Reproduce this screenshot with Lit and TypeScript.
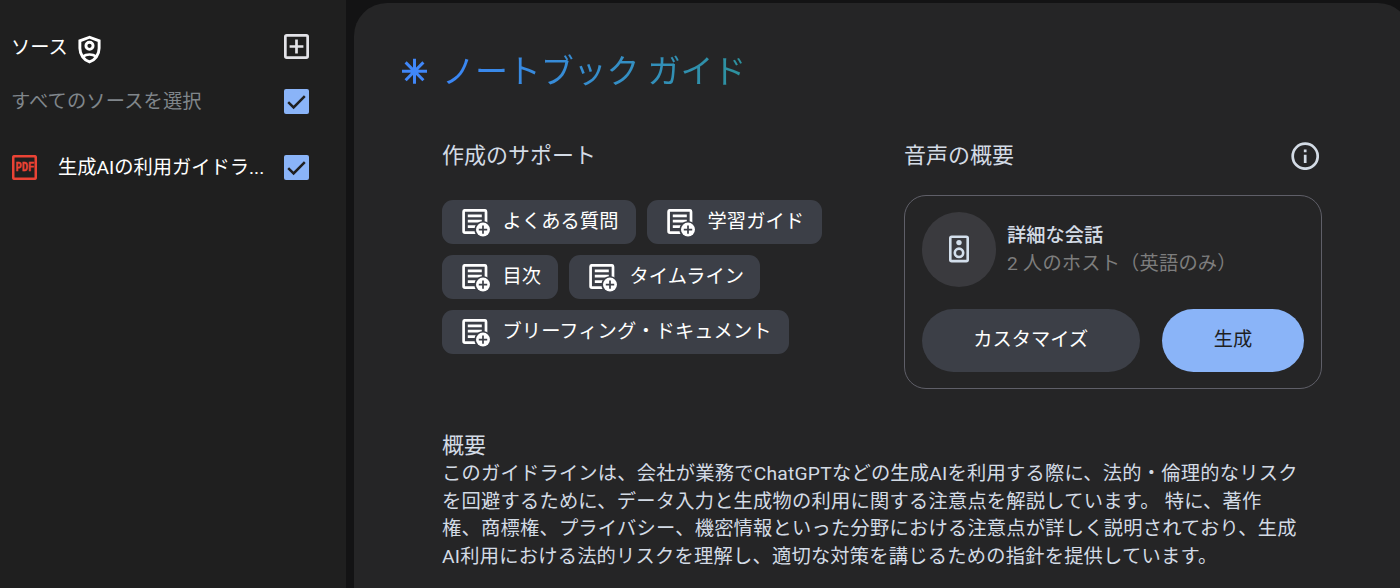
import { css, html, LitElement, svg } from "lit";
import { customElement, property } from "lit/decorators.js";

const shieldIcon = svg`
    <path d="M12 3.1 5 5.7v5.4c0 4.6 3 8.7 7 9.9 4-1.2 7-5.3 7-9.9V5.7z"/>
    <circle cx="12" cy="9.3" r="2.6"/>
    <path d="M7 17.2c3-2 7-2 10 0"/>
`;

@customElement('source-checkbox')
export class SourceCheckbox extends LitElement {

    static styles = css`
        :host {
            display: flex;
            width: 25px;
            height: 25px;
            border-radius: 2px;
            background: #8ab4f8;
        }

        svg {
            width: 25px;
            height: 25px;
            fill: none;
            stroke: #1f1f1f;
            stroke-width: 2.5;
        }
    `;

    render() {
        return html`<svg viewBox="0 0 25 25"><path d="M4.2 13.2 9.6 18.4 20.8 7.2"/></svg>`;
    }

}

@customElement('note-chip')
export class NoteChip extends LitElement {

    static styles = css`
        :host {
            display: flex;
        }

        .chip {
            display: flex;
            align-items: center;
            box-sizing: border-box;
            height: 44px;
            padding: 0 0 0 20px;
            border: 0;
            border-radius: 11px;
            background: #3c3f47;
            color: #fff;
            font: inherit;
            font-size: 19.25px;
            letter-spacing: 0.08px;
            white-space: nowrap;
        }

        .chip svg {
            width: 28px;
            height: 28px;
            margin: 1px 12.5px 0 0;
            flex: none;
        }

        .label {
            line-height: 28px;
            margin-top: -1px;
        }
    `;

    @property() label = '';
    @property({ type: Number }) width = 0;

    render() {
        return html`<button class="chip" style="width: ${this.width}px">
            <svg viewBox="0 0 28 28" fill="none" stroke="#fff" stroke-width="2.7">
                <rect x="1.6" y="1.3" width="22.4" height="22.4" rx="1.4"/>
                <path d="M5.8 6.8h14M5.8 12.2h14M5.8 17.6h8.5"/>
                <circle cx="21" cy="20.6" r="8.7" fill="#3c3f47" stroke="none"/>
                <circle cx="21" cy="20.6" r="7" fill="#fff" stroke="none"/>
                <path d="M21 16.4v8.4M16.8 20.6h8.4" stroke="#3c3f47" stroke-width="1.7"/>
            </svg>
            <span class="label">${this.label}</span>
        </button>`;
    }

}

@customElement('app-root')
export class AppRoot extends LitElement {

    static styles = css`
        :host {
            display: flex;
            gap: 8px;
            width: 1400px;
            height: 588px;
            overflow: hidden;
            background: #131314;
            color: #d3dbe5;
            font-family: Roboto, "Noto Sans CJK JP", sans-serif;
            font-size: 19.25px;
        }

        svg {
            display: block;
            flex: none;
        }

        h1, h2, p {
            margin: 0;
            font-weight: 400;
        }

        .sidebar {
            flex: none;
            box-sizing: border-box;
            width: 346px;
            padding: 33px 37px 0 12px;
            background: #1f1f1f;
            color: #fff;
        }

        .row {
            display: flex;
            align-items: center;
            height: 25px;
            white-space: nowrap;
        }

        .row > :last-child {
            margin-left: auto;
        }

        .select-all {
            margin-top: 31px;
            color: #80868b;
        }

        .source {
            margin-top: 41px;
        }

        .sources-title {
            line-height: 28px;
            margin: 5px 0 0 -1px;
        }

        .shield {
            width: 33px;
            height: 33px;
            margin: 7px 0 0 5px;
        }

        .add {
            margin-top: 1px;
        }

        .select-label {
            margin: -3px 0 0 -1px;
            letter-spacing: 0.12px;
        }

        .source-name {
            margin: -4px 0 0 21px;
        }

        .main {
            flex: none;
            box-sizing: border-box;
            width: 1057px;
            margin-top: 3px;
            padding: 44px 0 0 48px;
            border-radius: 33px 33px 0 0;
            background: #252526;
        }

        .guide {
            display: flex;
            align-items: center;
            gap: 14px;
            height: 48px;
        }

        .guide h1 {
            background: linear-gradient(90deg, #3b86f7, #348fc4 60%, #2d919c);
            -webkit-background-clip: text;
            background-clip: text;
            color: transparent;
            font-size: 33px;
            letter-spacing: -0.1px;
            line-height: 48px;
            margin-top: 1px;
        }

        .columns {
            display: flex;
            margin: 44px 0 0 40px;
        }

        .support {
            width: 462px;
        }

        h2 {
            font-size: 22px;
            line-height: 34px;
        }

        .chips {
            display: flex;
            flex-wrap: wrap;
            gap: 11px;
            width: 400px;
            margin-top: 27px;
        }

        .audio {
            width: 418px;
        }

        .audio-head {
            display: flex;
            justify-content: space-between;
            height: 32px;
            padding-right: 3px;
        }

        .audio-head svg {
            margin-top: 3px;
        }

        .card {
            box-sizing: border-box;
            height: 194px;
            margin-top: 24px;
            padding: 16px 16px 16px 16.5px;
            border: 1px solid #5f5f68;
            border-radius: 22px;
        }

        .host {
            display: flex;
            gap: 11px;
        }

        .avatar {
            display: flex;
            align-items: center;
            justify-content: center;
            width: 74.5px;
            height: 74.5px;
            border-radius: 50%;
            background: #3a3a3e;
        }

        .host-text {
            margin-top: 10px;
            line-height: 27.5px;
        }

        .host-title {
            font-weight: 500;
        }

        .muted {
            color: #7d7d7d;
            letter-spacing: 0.18px;
        }

        .actions {
            display: flex;
            gap: 22px;
            margin-top: 22px;
        }

        .button {
            width: 218.5px;
            height: 63px;
            padding: 0 0 4px;
            border: 0;
            border-radius: 31.5px;
            background: #3c3f47;
            color: #fff;
            font: inherit;
        }

        .primary {
            width: 142px;
            background: #8ab4f8;
            color: #1f1f1f;
        }

        .summary {
            margin: 40px 0 0 40px;
        }

        .summary p {
            letter-spacing: 0.23px;
            line-height: 27.5px;
            white-space: nowrap;
            margin-top: -3px;
        }
    `;

    private chips = [
        { label: 'よくある質問', width: 194 },
        { label: '学習ガイド', width: 175 },
        { label: '目次', width: 116 },
        { label: 'タイムライン', width: 191 },
        { label: 'ブリーフィング・ドキュメント', width: 347 },
    ];

    render() {
        return html`
            <aside class="sidebar">
                <div class="row">
                    <span class="sources-title">ソース</span>
                    <svg class="shield" viewBox="0 0 24 24" fill="none" stroke="#fff" stroke-width="2.1">${shieldIcon}</svg>
                    <svg class="add" width="25" height="25" viewBox="0 0 25 25" fill="none" stroke="#e3e3e8" stroke-width="2.7">
                        <rect x="1.35" y="1.35" width="22.3" height="22.3" rx="1.4"/>
                        <path d="M12.5 5.6v13.8M5.6 12.5h13.8"/>
                    </svg>
                </div>
                <div class="row select-all">
                    <span class="select-label">すべてのソースを選択</span>
                    <source-checkbox></source-checkbox>
                </div>
                <div class="row source">
                    <svg width="25" height="25" viewBox="0 0 25 25">
                        <rect x="1.2" y="1.2" width="22.6" height="22.6" rx="1.6" fill="none" stroke="#ea4335" stroke-width="2.6"/>
                        <text x="3.4" y="16.3" textLength="19" lengthAdjust="spacingAndGlyphs" fill="#ea4335" stroke="#ea4335" stroke-width="0.3" font-family="Liberation Mono, monospace" font-weight="700" font-size="12.5">PDF</text>
                    </svg>
                    <span class="source-name">生成AIの利用ガイドラ...</span>
                    <source-checkbox></source-checkbox>
                </div>
            </aside>
            <main class="main">
                <div class="guide">
                    <svg width="26" height="26" viewBox="0 0 26 26" stroke="#4087f9" stroke-width="3">
                        <path d="M12.5.8v25M0 13.3h25M3.6 4.4l17.8 17.8M21.4 4.4 3.6 22.2"/>
                    </svg>
                    <h1>ノートブック ガイド</h1>
                </div>
                <div class="columns">
                    <section class="support">
                        <h2>作成のサポート</h2>
                        <div class="chips">
                            ${this.chips.map(chip => html`<note-chip .label=${chip.label} .width=${chip.width}></note-chip>`)}
                        </div>
                    </section>
                    <section class="audio">
                        <div class="audio-head">
                            <h2>音声の概要</h2>
                            <svg width="28" height="28" viewBox="0 0 28 28" fill="none" stroke="#d3dbe5" stroke-width="2.7">
                                <circle cx="14.2" cy="14.2" r="12.5"/>
                                <path d="M14.2 12.8v8.2M14.2 7.4v2.8"/>
                            </svg>
                        </div>
                        <div class="card">
                            <div class="host">
                                <div class="avatar">
                                    <svg width="20" height="28" viewBox="0 0 20 28" fill="none" stroke="#d3dfec" stroke-width="2.6">
                                        <rect x="1.3" y="1.7" width="17.4" height="24.4" rx="1.4"/>
                                        <circle cx="10" cy="17.8" r="4.2"/>
                                        <circle cx="10" cy="7.6" r="2.7" fill="#d3dfec" stroke="none"/>
                                    </svg>
                                </div>
                                <div class="host-text">
                                    <div class="host-title">詳細な会話</div>
                                    <div class="muted">2 人のホスト（英語のみ）</div>
                                </div>
                            </div>
                            <div class="actions">
                                <button class="button">カスタマイズ</button>
                                <button class="button primary">生成</button>
                            </div>
                        </div>
                    </section>
                </div>
                <section class="summary">
                    <h2>概要</h2>
                    <p>
                        このガイドラインは、会社が業務でChatGPTなどの生成AIを利用する際に、法的・倫理的なリスク<br>
                        を回避するために、データ入力と生成物の利用に関する注意点を解説しています。 特に、著作<br>
                        権、商標権、プライバシー、機密情報といった分野における注意点が詳しく説明されており、生成<br>
                        AI利用における法的リスクを理解し、適切な対策を講じるための指針を提供しています。
                    </p>
                </section>
            </main>
        `;
    }

}

declare global {
    interface HTMLElementTagNameMap {
        'source-checkbox': SourceCheckbox
        'note-chip': NoteChip
        'app-root': AppRoot
    }
}
